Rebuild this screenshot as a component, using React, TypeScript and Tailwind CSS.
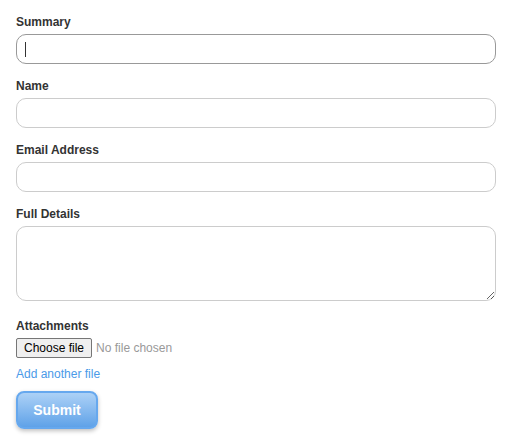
import React from "react";

export default function App() {
  const label = "block text-[12px] font-bold text-[#333] leading-[14px] mb-[5px]";
  const input =
    "block w-[480px] h-[30px] rounded-[10px] border border-[#ccc] bg-white outline-none px-2 text-[13px]";
  return (
    <div className="bg-white min-h-[447px] pl-[16px] pt-[15px]" style={{ fontFamily: '"Liberation Sans", Arial, sans-serif' }}>
      <div className="mb-[15px]">
        <label className={label}>Summary</label>
        <div className="relative w-[480px] h-[30px] rounded-[10px] border border-[#999] bg-white">
          <div className="absolute left-[8px] top-[7px] w-px h-[15px] bg-[#333]" />
        </div>
      </div>
      <div className="mb-[15px]">
        <label className={label}>Name</label>
        <input className={input} />
      </div>
      <div className="mb-[15px]">
        <label className={label}>Email Address</label>
        <input className={input} />
      </div>
      <div className="mb-[18px]">
        <label className={label}>Full Details</label>
        <textarea className="block w-[480px] h-[75px] rounded-[10px] border border-[#ccc] bg-white outline-none px-2 text-[13px]" />
      </div>
      <div>
        <label className={label}>Attachments</label>
        <div className="flex items-center h-[20px]">
          <span className="h-[20px] px-[7px] flex items-center border border-[#767676] rounded-[2px] bg-[#efefef] text-[12px] text-black">Choose file</span>
          <span className="ml-[4px] text-[12px] text-[#999]">No file chosen</span>
        </div>
      </div>
      <div className="mt-[9px] text-[12px] text-[#4a9ae8] leading-[15px]">Add another file</div>
      <button className="mt-[9px] w-[82px] h-[38px] rounded-[8px] border-2 border-[#66a8ee] text-white font-bold text-[14px] shadow-[0_2px_4px_rgba(0,0,0,0.25)] bg-gradient-to-b from-[#acd1f6] to-[#5fa2e8]">
        Submit
      </button>
    </div>
  );
}
